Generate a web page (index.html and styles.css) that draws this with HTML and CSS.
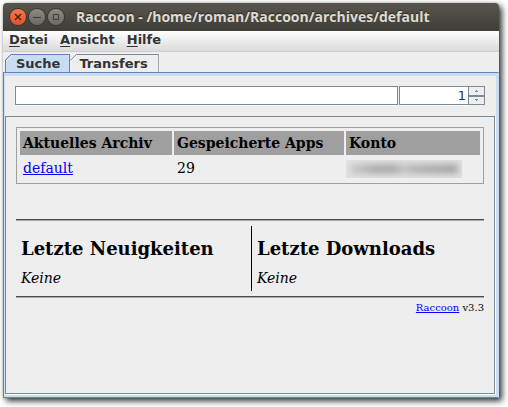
FILE: index.html
```html
<!DOCTYPE html>
<html lang="de">
<head>
<meta charset="utf-8">
<title>Raccoon - /home/roman/Raccoon/archives/default</title>
<link rel="stylesheet" href="styles.css">
</head>
<body>
<div class="window">
  <header class="titlebar">
    <button class="win-button close" aria-label="Schließen"><svg viewBox="0 0 16 16"><path d="M5 5l6 6M11 5l-6 6"/></svg></button>
    <button class="win-button" aria-label="Minimieren"><svg viewBox="0 0 16 16"><path d="M4 8.500h8"/></svg></button>
    <button class="win-button" aria-label="Maximieren"><svg viewBox="0 0 16 16"><path d="M5.500 5.500h5v5h-5z"/></svg></button>
    <h1 class="title">Raccoon - /home/roman/Raccoon/archives/default</h1>
  </header>
  <nav class="menubar">
    <button class="menu"><u>D</u>atei</button>
    <button class="menu"><u>A</u>nsicht</button>
    <button class="menu"><u>H</u>ilfe</button>
  </nav>
  <div class="tabs" role="tablist">
    <button class="tab selected" role="tab" aria-selected="true">Suche</button>
    <button class="tab" role="tab" aria-selected="false">Transfers</button>
  </div>
  <main class="panel">
    <form class="search">
      <input class="field query" type="text" aria-label="Suche">
      <div class="spinner">
        <input class="field page" type="number" value="1" aria-label="Seite">
        <div class="steps">
          <button class="step" type="button" aria-label="Weiter"><svg viewBox="0 0 3 2"><path d="M0 2V1h1V0h1v1h1v1z"/></svg></button>
          <button class="step" type="button" aria-label="Zurück"><svg viewBox="0 0 3 2"><path d="M0 0v1h1v1h1V1h1V0z"/></svg></button>
        </div>
      </div>
    </form>
    <section class="page-view">
      <table class="archive">
        <colgroup><col class="col-archive"><col class="col-apps"><col class="col-account"></colgroup>
        <thead><tr><th>Aktuelles Archiv</th><th>Gespeicherte Apps</th><th>Konto</th></tr></thead>
        <tbody><tr><td><a href="#">default</a></td><td>29</td><td class="account"><div class="redacted"><i class="smudge"></i></div></td></tr></tbody>
      </table>
      <div class="recent">
        <section class="list"><h2>Letzte Neuigkeiten</h2><p>Keine</p></section>
        <section class="list"><h2>Letzte Downloads</h2><p>Keine</p></section>
      </div>
      <footer class="version"><a href="#">Raccoon</a> v3.3</footer>
    </section>
  </main>
</div>
</body>
</html>
```
FILE: styles.css
```css
* { box-sizing: border-box; }
body {
  margin: 0;
  height: 100vh;
  padding: 3px 9px 9px 3px;
  background: #fff;
  overflow: hidden;
  color: #000;
  font: 14px/18px "DejaVu Serif", serif;
}
button { margin: 0; padding: 0; border: 0; background: none; color: inherit; font: inherit; }
a { color: #00f; }
.window {
  display: flex;
  flex-direction: column;
  height: 100%;
  background: #eee;
  border-radius: 4px 4px 0 0;
  box-shadow: 3px 3px 6px rgba(0, 0, 0, .8), 0 0 3px rgba(0, 0, 0, .2);
}
.titlebar {
  display: flex;
  align-items: center;
  gap: 3px;
  height: 28px;
  padding-left: 7px;
  border-radius: 4px 4px 0 0;
  background: linear-gradient(#59564d, #3e3d38);
}
.win-button {
  width: 16px;
  height: 16px;
  border-radius: 50%;
  background: linear-gradient(#8c8a82, #6a6962);
  box-shadow: 0 0 0 1px #36352f;
}
.win-button.close { background: linear-gradient(#f4764d, #e2532a); }
.win-button svg { display: block; fill: none; stroke: #3c3b37; stroke-width: 1; }
.win-button.close svg { stroke: #56230f; stroke-width: 1.5; }
.title {
  margin: 0 0 0 9px;
  color: #dfdbd2;
  font: bold 14px/20px "Open Sans", sans-serif;
  white-space: nowrap;
  text-shadow: 0 -1px 1px #2c2b27;
}
.menubar {
  display: flex;
  gap: 12px;
  height: 21px;
  padding: 0 6px 2px;
  border-bottom: 1px solid #ccc;
  background: linear-gradient(#fff, #dadada);
  color: #333;
  font: bold 13px/18px "DejaVu Sans", sans-serif;
}
.menu u { text-decoration-thickness: 1px; text-underline-offset: 2px; }
.tabs {
  display: flex;
  height: 20px;
  padding: 2px 2px 0;
  color: #333;
  font: bold 13px/18px "DejaVu Sans", sans-serif;
}
.tab {
  padding: 0 10px 0 9px;
  border: 1px solid #7a8a99;
  border-left-width: 0;
  border-bottom: 0;
  background: linear-gradient(135deg, #7a8a99 5px, #fff 5px, #fff 6px, #eee 6px);
  background-origin: border-box;
  clip-path: polygon(6px 0, 100% 0, 100% 100%, 0 100%, 0 6px);
}
.tab.selected {
  padding: 0 9px 0 10px;
  border-left-width: 1px;
  border-color: #6382bf;
  background: linear-gradient(135deg, #6382bf 5px, #fff 5px, #fff 6px, #c8ddf2 6px);
  background-origin: border-box;
}
.panel {
  display: flex;
  flex-direction: column;
  flex: 1;
  border: 1px solid #6382bf;
  border-right-color: #c8ddf2;
  box-shadow: inset 0 3px #c8ddf2, inset 1px 0 #c8ddf2, inset -2px 0 #c8ddf2, inset 0 -2px #c8ddf2;
  padding: 3px 3px 3px 1px;
}
.search { display: flex; gap: 1px; padding: 10px 10px 11px; }
.field {
  min-width: 0;
  height: 19px;
  border: 1px solid #7a8a99;
  border-radius: 0;
  background: #fff;
  color: #333;
  font: 13px/17px "DejaVu Sans", sans-serif;
  outline: 0;
  box-shadow: 0 1px #fff;
}
.query { flex: 1; padding: 0 2px; }
.spinner { display: flex; width: 86px; }
.page { flex: 1; padding: 0 2px; text-align: right; appearance: textfield; }
.page::-webkit-inner-spin-button { display: none; }
.steps { display: flex; flex-direction: column; width: 16px; }
.step {
  display: grid;
  place-items: center;
  flex: 1;
  border: 1px solid #7a8a99;
  margin-left: -1px;
}
.step svg { width: 3px; height: 2px; fill: #7a8a99; shape-rendering: crispEdges; }
.page-view {
  flex: 1;
  padding: 10px;
  border: 1px solid #7a8a99;
  box-shadow: 1px 1px #fff;
}
.archive {
  width: 100%;
  table-layout: fixed;
  border: 1px solid #a0a0a0;
  border-spacing: 2px;
  padding: 1px;
}
.col-archive { width: 152px; }
.col-apps { width: 170px; }
th, td { height: 24px; padding: 3px; text-align: left; white-space: nowrap; }
td { height: 23px; padding-top: 2px; }
th { background: #9f9f9f; }
.account { padding: 2px 0; }
.redacted {
  display: flex;
  align-items: center;
  width: 116px;
  height: 18px;
  padding: 0 4px;
  overflow: hidden;
  background: #e2e2e2;
}
.smudge {
  flex: 1;
  height: 10px;
  background: linear-gradient(90deg, #ccc, #aaa 25%, #aaa 40%, #c4c4c4 50%, #b4b4b4 60%, #a4a4a4);
  filter: blur(3px);
}
.recent {
  display: grid;
  grid-template-columns: 1fr 1fr;
  gap: 2px;
  margin-top: 35px;
  padding: 6px 0 5px;
  border: solid #4a4a4a;
  border-width: 1px 0;
  box-shadow: 0 1px #aaa, inset 0 1px #aaa;
}
.list { height: 65px; padding: 11px 5px 0; }
.list + .list { border-left: 1px solid #000; }
h2 { margin: 0; font-size: 18px; line-height: 24px; white-space: nowrap; }
p { margin: 8px 0 0; font-style: italic; }
.version { padding-top: 4px; text-align: right; font-size: 10px; line-height: 14px; }
```
